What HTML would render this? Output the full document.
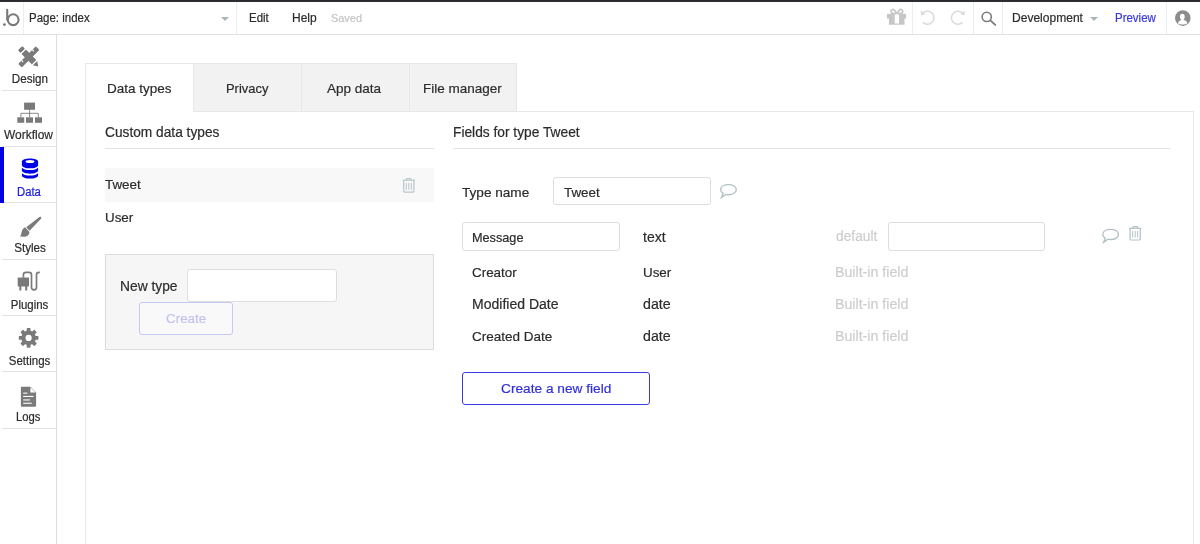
<!DOCTYPE html>
<html><head><meta charset="utf-8">
<style>
*{box-sizing:border-box}
html,body{margin:0;padding:0}
body{width:1200px;height:544px;overflow:hidden;position:relative;background:#fff;font-family:"Liberation Sans",sans-serif;color:#3a3a3a}
.a{position:absolute}
.t{position:absolute;white-space:nowrap;line-height:1}
.hl{position:absolute;height:1px}
.vl{position:absolute;width:1px}
</style></head><body>
<!-- top dark strip -->
<div class="a" style="left:0;top:0;width:1200px;height:2px;background:#2c2d31"></div>
<!-- top bar bottom border -->
<div class="hl" style="left:0;top:34px;width:1200px;background:#e2e2e2"></div>
<!-- separators -->
<div class="vl" style="left:23px;top:2px;height:32px;background:#e8eef2"></div>
<div class="vl" style="left:236px;top:2px;height:32px;background:#e8eef2"></div>
<div class="vl" style="left:912px;top:2px;height:32px;background:#e8eef2"></div>
<div class="vl" style="left:973px;top:2px;height:32px;background:#e8eef2"></div>
<div class="vl" style="left:1002px;top:2px;height:32px;background:#e8eef2"></div>
<div class="vl" style="left:1166px;top:2px;height:32px;background:#e8eef2"></div>

<!-- logo -->
<svg class="a" style="left:0;top:0" width="23" height="34" viewBox="0 0 23 34">
  <circle cx="4.4" cy="24.6" r="1.45" fill="#7a7a7a"/>
  <path d="M7.2 9.9 V19.7" stroke="#7a7a7a" stroke-width="2.1" fill="none" stroke-linecap="round"/>
  <circle cx="13.2" cy="19.7" r="5.4" stroke="#7a7a7a" stroke-width="2.1" fill="none"/>
</svg>

<svg class="a" style="left:221px;top:17px" width="8" height="4"><path d="M0 0 H8 L4 4 Z" fill="#a9b5bd"/></svg>

<svg class="a" style="left:1090px;top:17px" width="8" height="4"><path d="M0 0 H8 L4 4 Z" fill="#a9b5bd"/></svg>


<!-- gift -->
<svg class="a" style="left:880px;top:4px" width="30" height="24" viewBox="880 4 30 24">
  <path d="M887 13.8 H894.7 V23.5 H899 V13.8 H906.1 V18.6 H904.5 V24.8 H888.9 V18.6 H887 Z" fill="#c6c6c6"/>
  <g fill="none" stroke="#c6c6c6" stroke-width="1.7">
    <path d="M896.6 13.6 C895.2 10.6 893.6 9.3 892.4 9.5 C890.8 9.8 890.6 12.2 891.8 12.9 C892.8 13.5 894.6 13.6 896.6 13.6"/>
    <path d="M897.2 13.6 C898.6 10.6 900.2 9.3 901.4 9.5 C903 9.8 903.2 12.2 902 12.9 C901 13.5 899.2 13.6 897.2 13.6"/>
  </g>
</svg>
<!-- undo -->
<svg class="a" style="left:914px;top:4px" width="60" height="26" viewBox="914 4 60 26">
  <path d="M922.2 14.0 A6.5 6.5 0 1 1 923.0 22.4" fill="none" stroke="#dadada" stroke-width="1.5"/>
  <path d="M920.7 10.6 L921.0 15.4 L925.4 14.2 Z" fill="#dadada"/>
  <path d="M963.3 14.0 A6.5 6.5 0 1 0 962.5 22.4" fill="none" stroke="#dadada" stroke-width="1.5"/>
  <path d="M964.8 10.6 L964.5 15.4 L960.1 14.2 Z" fill="#dadada"/>
</svg>
<!-- search -->
<svg class="a" style="left:976px;top:4px" width="26" height="26" viewBox="976 4 26 26">
  <circle cx="986.75" cy="16.9" r="4.6" fill="none" stroke="#7c7c7c" stroke-width="1.6"/>
  <path d="M990.6 20.6 L995.3 24.9" stroke="#7c7c7c" stroke-width="1.9" stroke-linecap="round"/>
</svg>
<!-- avatar -->
<svg class="a" style="left:1170px;top:4px" width="26" height="26" viewBox="1170 4 26 26">
  <circle cx="1182.8" cy="18.1" r="7.8" fill="#8c8c8c"/>
  <ellipse cx="1182.3" cy="16.7" rx="2.4" ry="3.0" fill="#fff"/><rect x="1181.1" y="18.5" width="2.6" height="2.5" fill="#fff"/>
  <path d="M1177.9 23.3 C1178.2 21.0 1180.2 19.9 1182.6 19.9 C1185.1 19.9 1187.1 21.0 1187.4 23.3 C1186.2 24.3 1184.5 24.6 1182.6 24.6 C1180.7 24.6 1179.1 24.3 1177.9 23.3 Z" fill="#fff"/>
</svg>

<!-- sidebar -->
<!-- sidebar separators -->
<div class="hl" style="left:2px;top:90px;width:54px;background:#e3e3e3"></div>
<div class="hl" style="left:2px;top:146px;width:54px;background:#e3e3e3"></div>
<div class="hl" style="left:2px;top:202px;width:54px;background:#e3e3e3"></div>
<div class="hl" style="left:2px;top:259px;width:54px;background:#e3e3e3"></div>
<div class="hl" style="left:2px;top:315px;width:54px;background:#e3e3e3"></div>
<div class="hl" style="left:2px;top:371px;width:54px;background:#e3e3e3"></div>
<div class="hl" style="left:2px;top:428px;width:54px;background:#e3e3e3"></div>
<div class="a" style="left:0;top:147px;width:4px;height:56px;background:#0000e6"></div>

<!-- design icon -->
<svg class="a" style="left:10px;top:38px" width="40" height="40" viewBox="10 38 40 40">
  <g transform="translate(28.8 56.9) rotate(-45)" fill="#7a7a7a">
    <rect x="-12.4" y="-2.6" width="24.8" height="5.2" rx="0.9"/>
  </g>
  <g transform="translate(28.8 56.9) rotate(-45)" stroke="#fff" stroke-width="1.1">
    <path d="M-7.6 -2.7 V-0.4"/><path d="M7.6 -2.7 V-0.4"/>
  </g>
  <g transform="translate(28.8 56.9) rotate(45)">
    <rect x="-12.3" y="-3.1" width="3.9" height="6.2" rx="1.1" fill="#7a7a7a"/>
    <rect x="-8.4" y="-3.9" width="1.2" height="7.8" fill="#fff"/>
    <rect x="-7.2" y="-3.1" width="14.8" height="6.2" fill="#7a7a7a"/>
    <rect x="7.6" y="-3.9" width="1.2" height="7.8" fill="#fff"/>
    <path d="M8.8 -3.1 L13.4 0 L8.8 3.1 Z" fill="#7a7a7a"/>
  </g>
</svg>

<!-- workflow icon -->
<svg class="a" style="left:10px;top:96px" width="40" height="40" viewBox="10 96 40 40">
  <g fill="#7a7a7a">
    <rect x="24.1" y="102.6" width="10.9" height="7.2"/>
    <rect x="17.3" y="117.3" width="6.9" height="5.5"/>
    <rect x="26" y="117.3" width="7" height="5.5"/>
    <rect x="35" y="117.3" width="7" height="5.5"/>
  </g>
  <path d="M29.6 109.8 V117.3 M20.9 117.3 V113.3 H38.3 V117.3" fill="none" stroke="#7a7a7a" stroke-width="0.9"/>
</svg>

<!-- data icon -->
<svg class="a" style="left:10px;top:150px" width="40" height="40" viewBox="10 150 40 40">
  <g fill="#0000e6">
    <path d="M21.9 161.5 C21.9 157.4 38.1 157.4 38.1 161.5 V165.2 C38.1 169.3 21.9 169.3 21.9 165.2 Z"/>
    <path d="M21.9 167.4 C23.5 170.8 36.5 170.8 38.1 167.4 V170.6 C38.1 174.7 21.9 174.7 21.9 170.6 Z"/>
    <path d="M21.9 172.9 C23.5 176.3 36.5 176.3 38.1 172.9 V175.4 C38.1 179.5 21.9 179.5 21.9 175.4 Z"/>
  </g>
  <ellipse cx="30" cy="161.4" rx="4.4" ry="1.5" fill="#fff"/>
</svg>

<!-- styles icon -->
<svg class="a" style="left:10px;top:206px" width="40" height="40" viewBox="10 206 40 40">
  <path d="M39.4 217.0 Q40.3 216.3 41.0 217.1 Q41.7 217.9 41.0 218.8 L29.5 230.8 L26.3 227.2 Z" fill="#7a7a7a"/>
  <path d="M29.4 231.9 C29.5 234.9 27 236.7 23.6 236.7 C22.2 236.7 20.9 236.6 19.8 236.3 C21.3 235.3 21.2 233.6 21.6 232.2 C22.2 229.6 23.6 227.9 25.1 227.3 Z" fill="#7a7a7a"/>
</svg>

<!-- plugins icon -->
<svg class="a" style="left:10px;top:264px" width="40" height="40" viewBox="10 264 40 40">
  <rect x="17.7" y="277.6" width="11.3" height="8.8" rx="0.6" fill="#7a7a7a"/>
  <rect x="19.3" y="286" width="2" height="4.5" fill="#7a7a7a"/>
  <rect x="25.2" y="286" width="2" height="4.5" fill="#7a7a7a"/>
  <path d="M23.4 277.8 V274.8 Q23.4 272.4 25.8 272.4 H29.1 Q31.5 272.4 31.5 274.8 V287.3 Q31.5 289.8 34 289.8 Q36.5 289.8 36.5 287.3 V274.8 Q36.5 272.4 39 272.4 H39.8" fill="none" stroke="#7a7a7a" stroke-width="1.7"/>
</svg>

<!-- settings icon -->
<svg class="a" style="left:10px;top:320px" width="40" height="40" viewBox="10 320 40 40">
  <g transform="translate(28.6 337.9)" fill="#7a7a7a">
    <circle r="7.3"/>
    <rect x="-1.9" y="-9.8" width="3.8" height="19.6" rx="0.6"/>
    <rect x="-1.9" y="-9.8" width="3.8" height="19.6" rx="0.6" transform="rotate(45)"/>
    <rect x="-1.9" y="-9.8" width="3.8" height="19.6" rx="0.6" transform="rotate(90)"/>
    <rect x="-1.9" y="-9.8" width="3.8" height="19.6" rx="0.6" transform="rotate(135)"/>
    <circle r="3.1" fill="#fff"/>
  </g>
</svg>

<!-- logs icon -->
<svg class="a" style="left:10px;top:378px" width="40" height="40" viewBox="10 378 40 40">
  <path d="M21.8 386.7 H30.5 L36.1 392.5 V405.7 Q36.1 406.7 35.1 406.7 H21.8 Q20.9 406.7 20.9 405.7 V387.7 Q20.9 386.7 21.8 386.7 Z" fill="#7a7a7a"/>
  <path d="M30.4 387.2 L35.7 392.6 H30.4 Z" fill="#fff"/>
  <g fill="#fff">
    <rect x="23.2" y="392.6" width="4.1" height="1.1"/>
    <rect x="23.2" y="395.9" width="10.3" height="1.1"/>
    <rect x="23.2" y="399.4" width="6.7" height="1.1"/>
    <rect x="23.2" y="402.7" width="8.5" height="1.1"/>
  </g>
</svg>

<div class="vl" style="left:56px;top:35px;height:509px;background:#dedede"></div>

<!-- main panel -->
<div class="vl" style="left:85px;top:63px;height:481px;background:#e8e8e8"></div>
<div class="vl" style="left:1193px;top:111px;height:433px;background:#e8e8e8"></div>
<div class="hl" style="left:85px;top:63px;width:432px;background:#e8e8e8"></div>
<div class="a" style="left:193px;top:64px;width:324px;height:47px;background:#f2f2f2"></div>
<div class="vl" style="left:193px;top:63px;height:48px;background:#e8e8e8"></div>
<div class="vl" style="left:301px;top:63px;height:48px;background:#e8e8e8"></div>
<div class="vl" style="left:409px;top:63px;height:48px;background:#e8e8e8"></div>
<div class="vl" style="left:516px;top:63px;height:48px;background:#e8e8e8"></div>
<div class="hl" style="left:193px;top:111px;width:1001px;background:#e8e8e8"></div>



<!-- left section -->
<div class="hl" style="left:105px;top:148px;width:329px;background:#e3e3e3"></div>
<div class="a" style="left:105px;top:168px;width:329px;height:34px;background:#f8f8f8"></div>
<svg class="a" style="left:400px;top:176px" width="18" height="18" viewBox="400 176 18 18">
  <g fill="none" stroke="#b9c4c8" stroke-width="1.2">
    <path d="M402.7 180.2 H414.9"/>
    <path d="M406.5 180.2 V179.3 Q406.5 178.5 407.3 178.5 H410.3 Q411.1 178.5 411.1 179.3 V180.2"/>
    <path d="M403.7 180.4 V191.2 Q403.7 192.2 404.7 192.2 H412.9 Q413.9 192.2 413.9 191.2 V180.4"/>
    <path d="M406.3 183 V189.8 M408.8 183 V189.8 M411.3 183 V189.8" stroke-width="1"/>
  </g>
</svg>

<div class="a" style="left:105px;top:254px;width:329px;height:96px;background:#f6f6f6;border:1px solid #dcdcdc"></div>
<div class="a" style="left:187px;top:269px;width:150px;height:33px;background:#fff;border:1px solid #dedede;border-radius:3px"></div>
<div class="a" style="left:139px;top:302px;width:94px;height:33px;background:#f9f9f9;border:1px solid #c8c8f4;border-radius:3px"></div>

<!-- right section -->
<div class="hl" style="left:453px;top:148px;width:717px;background:#e3e3e3"></div>
<div class="a" style="left:553px;top:177px;width:158px;height:28px;background:#fff;border:1px solid #dedede;border-radius:3px"></div>
<svg class="a" style="left:718px;top:182px" width="22" height="18" viewBox="718 182 22 18">
  <path d="M728.4 184.6 C724 184.6 720.6 186.6 720.6 189.6 C720.6 191.2 721.6 192.5 723.1 193.3 L721.4 197.6 L725.7 194.4 C726.6 194.6 727.5 194.7 728.4 194.7 C732.8 194.7 736.3 192.6 736.3 189.6 C736.3 186.6 732.8 184.6 728.4 184.6 Z" fill="none" stroke="#b3c1c5" stroke-width="1.35"/>
</svg>

<div class="a" style="left:462px;top:222px;width:158px;height:29px;background:#fff;border:1px solid #dedede;border-radius:3px"></div>
<div class="a" style="left:888px;top:222px;width:157px;height:29px;background:#fff;border:1px solid #dedede;border-radius:3px"></div>
<svg class="a" style="left:1100px;top:226px" width="22" height="20" viewBox="1100 226 22 20">
  <path d="M1110.6 229.4 C1106.2 229.4 1102.8 231.4 1102.8 234.4 C1102.8 236 1103.8 237.3 1105.3 238.1 L1103.6 242.4 L1107.9 239.2 C1108.8 239.4 1109.7 239.5 1110.6 239.5 C1115 239.5 1118.5 237.4 1118.5 234.4 C1118.5 231.4 1115 229.4 1110.6 229.4 Z" fill="none" stroke="#b3c1c5" stroke-width="1.35"/>
</svg>
<svg class="a" style="left:1126px;top:224px" width="18" height="18" viewBox="1126 224 18 18">
  <g fill="none" stroke="#b3c1c5" stroke-width="1.2">
    <path d="M1129.1 228.3 H1141.3"/>
    <path d="M1132.9 228.3 V227.4 Q1132.9 226.6 1133.7 226.6 H1136.7 Q1137.5 226.6 1137.5 227.4 V228.3"/>
    <path d="M1130.1 228.5 V239 Q1130.1 240 1131.1 240 H1139.3 Q1140.3 240 1140.3 239 V228.5"/>
    <path d="M1132.7 231 V237.6 M1135.2 231 V237.6 M1137.7 231 V237.6" stroke-width="1"/>
  </g>
</svg>


<div class="a" style="left:462px;top:372px;width:188px;height:33px;background:#fff;border:1.3px solid #3b3be6;border-radius:3px"></div>
<svg class="a" style="left:0;top:0;will-change:transform" width="1200" height="544" font-family="Liberation Sans, sans-serif" stroke-width="0.2">
<text transform="translate(29 22) scale(1 1.08)" font-size="11.5" fill="#2c2c2c" stroke="#2c2c2c">Page: index</text>
<text transform="translate(249 22) scale(1 1.08)" font-size="11.5" fill="#2c2c2c" stroke="#2c2c2c">Edit</text>
<text transform="translate(292 22) scale(1 1.08)" font-size="12" fill="#2c2c2c" stroke="#2c2c2c">Help</text>
<text transform="translate(331 22) scale(1 1.08)" font-size="10.95" fill="#c4c4c4" stroke="#c4c4c4">Saved</text>
<text transform="translate(1012 22) scale(1 1.08)" font-size="12.05" fill="#2c2c2c" stroke="#2c2c2c">Development</text>
<text transform="translate(1115 22) scale(1 1.08)" font-size="11.5" fill="#3a3ae0" stroke="#3a3ae0">Preview</text>
<text transform="translate(11.8 83) scale(1 1.05)" font-size="11.65" fill="#2c2c2c" stroke="#2c2c2c">Design</text>
<text transform="translate(4 139) scale(1 1.05)" font-size="11.95" fill="#2c2c2c" stroke="#2c2c2c">Workflow</text>
<text transform="translate(17 196) scale(1 1.05)" font-size="11.3" fill="#2020e0" stroke="#2020e0">Data</text>
<text transform="translate(14.2 252) scale(1 1.05)" font-size="11.65" fill="#2c2c2c" stroke="#2c2c2c">Styles</text>
<text transform="translate(10.8 309) scale(1 1.05)" font-size="11.45" fill="#2c2c2c" stroke="#2c2c2c">Plugins</text>
<text transform="translate(8.8 365) scale(1 1.05)" font-size="11.5" fill="#2c2c2c" stroke="#2c2c2c">Settings</text>
<text transform="translate(16 421) scale(1 1.05)" font-size="11.3" fill="#2c2c2c" stroke="#2c2c2c">Logs</text>
<text x="107" y="93" font-size="13.5" fill="#2c2c2c" stroke="#2c2c2c">Data types</text>
<text x="226" y="93" font-size="12.93" fill="#2c2c2c" stroke="#2c2c2c">Privacy</text>
<text x="327" y="93" font-size="13.5" fill="#2c2c2c" stroke="#2c2c2c">App data</text>
<text x="423" y="93" font-size="13.5" fill="#2c2c2c" stroke="#2c2c2c">File manager</text>
<text x="105" y="137" font-size="13.73" fill="#2c2c2c" stroke="#2c2c2c">Custom data types</text>
<text x="105" y="189" font-size="13.4" fill="#2c2c2c" stroke="#2c2c2c">Tweet</text>
<text x="105" y="222" font-size="13.4" fill="#2c2c2c" stroke="#2c2c2c">User</text>
<text x="120" y="291" font-size="13.8" fill="#2c2c2c" stroke="#2c2c2c">New type</text>
<text x="166" y="323" font-size="13.4" fill="#c3c3f2" stroke="#c3c3f2">Create</text>
<text x="453" y="137" font-size="13.75" fill="#2c2c2c" stroke="#2c2c2c">Fields for type Tweet</text>
<text x="462" y="197" font-size="13.6" fill="#2c2c2c" stroke="#2c2c2c">Type name</text>
<text x="564" y="197" font-size="13.4" fill="#2c2c2c" stroke="#2c2c2c">Tweet</text>
<text x="472" y="242" font-size="12.7" fill="#2c2c2c" stroke="#2c2c2c">Message</text>
<text x="643" y="242" font-size="14" fill="#2c2c2c" stroke="#2c2c2c">text</text>
<text x="836" y="241" font-size="13.78" fill="#cdcdcd" stroke="#cdcdcd">default</text>
<text x="472" y="277" font-size="13.4" fill="#2c2c2c" stroke="#2c2c2c">Creator</text>
<text x="643" y="277" font-size="13.4" fill="#2c2c2c" stroke="#2c2c2c">User</text>
<text x="835" y="277" font-size="14.2" fill="#cdcdcd" stroke="#cdcdcd">Built-in field</text>
<text x="472" y="309" font-size="14.04" fill="#2c2c2c" stroke="#2c2c2c">Modified Date</text>
<text x="643" y="309" font-size="14.2" fill="#2c2c2c" stroke="#2c2c2c">date</text>
<text x="835" y="309" font-size="14.2" fill="#cdcdcd" stroke="#cdcdcd">Built-in field</text>
<text x="472" y="341" font-size="13.5" fill="#2c2c2c" stroke="#2c2c2c">Created Date</text>
<text x="643" y="341" font-size="14.2" fill="#2c2c2c" stroke="#2c2c2c">date</text>
<text x="835" y="341" font-size="14.2" fill="#cdcdcd" stroke="#cdcdcd">Built-in field</text>
<text x="501" y="393" font-size="13.7" fill="#3030d8" stroke="#3030d8">Create a new field</text>
</svg>
</body></html>
